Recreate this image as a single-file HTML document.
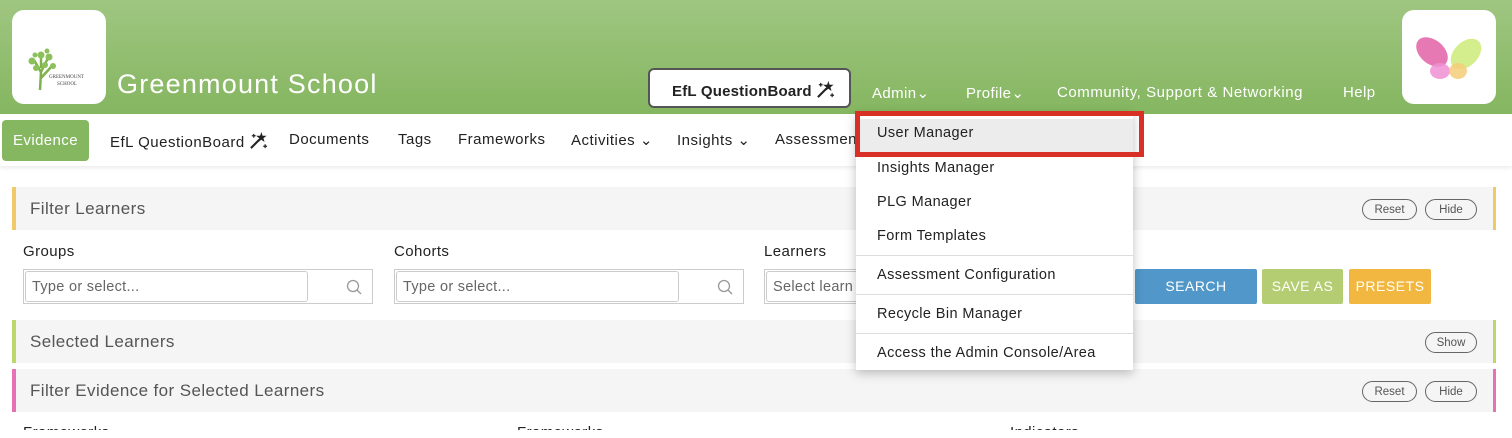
<!DOCTYPE html>
<html><head><meta charset="utf-8"><style>
*{box-sizing:border-box;margin:0;padding:0}
body{width:1512px;height:438px;overflow:hidden;background:#fff;font-family:"Liberation Sans",sans-serif;position:relative;color:#222}
.a{position:absolute;white-space:nowrap}
.hdr{position:absolute;left:0;top:0;width:1512px;height:114px;background:linear-gradient(#9fc681,#85b660)}
.logo{position:absolute;background:#fff;border-radius:12px}
.w{color:#fff;font-size:15px;letter-spacing:.4px}
.nav{font-size:15px;color:#222;letter-spacing:.5px}
.panel{position:absolute;left:12px;width:1484px;height:43px;background:#f5f5f5}
.panel .t{position:absolute;left:14px;top:12px;font-size:17px;color:#555;letter-spacing:.4px}
.pill{position:absolute;top:12px;height:21px;border:1px solid #666;border-radius:11px;font-size:11.5px;color:#555;display:flex;align-items:center;justify-content:center}
.lbl{font-size:15px;color:#222;letter-spacing:.4px}
.inp{position:absolute;top:269px;height:35px;border:1px solid #ccc}
.inp .f{position:absolute;left:1px;top:1px;height:31px;border:1px solid #ccc;border-radius:3px;font-size:14.5px;color:#666;padding:7px 6px;letter-spacing:.3px}
.btn{position:absolute;top:269px;height:35px;color:#fff;font-size:14px;text-align:center;line-height:35px;letter-spacing:.5px;border-radius:2px}
.dd{position:absolute;left:856px;top:113px;width:277px;height:257px;background:#fff;box-shadow:0 3px 10px rgba(0,0,0,.25)}
.di{position:absolute;left:21px;font-size:14.5px;color:#222;letter-spacing:.4px}
.sep{position:absolute;left:0;width:277px;height:1px;background:#ddd}
.wand{display:inline-block;vertical-align:-3px;margin-left:4px}
</style></head><body>
<svg width="0" height="0" style="position:absolute"><defs><symbol id="wd" viewBox="0 0 20 20"><path d="M2 18 L11 9" stroke="#222" stroke-width="2.2"/><path d="M13 1 L14.3 5 L18.5 5 L15.2 7.6 L16.4 11.6 L13 9.2 L9.6 11.6 L10.8 7.6 L7.5 5 L11.7 5 Z" fill="#222"/><path d="M5 3 v4 M3 5 h4 M17 14 v4 M15 16 h4" stroke="#222" stroke-width="1.3"/></symbol></defs></svg>
<div class="hdr"></div>
<div class="logo" style="left:12px;top:10px;width:94px;height:94px">
<svg width="94" height="94" viewBox="0 0 94 94"><g stroke="#7fb24c" stroke-width="2.5" fill="none"><path d="M28 80 L29 62 L22 50 M29 62 L36 48 M29 68 L40 56 M29 58 L29 46"/></g><g fill="#8cc05a"><circle cx="20" cy="51" r="3.5"/><circle cx="29" cy="45" r="3.5"/><circle cx="37" cy="47" r="3.5"/><circle cx="24" cy="58" r="3"/><circle cx="41" cy="56" r="3"/><circle cx="33" cy="55" r="3"/><circle cx="23" cy="45" r="2.5"/><circle cx="35" cy="41" r="2.5"/></g><text x="37" y="68" font-size="5" fill="#444" font-family="Liberation Serif">GREENMOUNT</text><text x="45" y="75" font-size="5" fill="#444" font-family="Liberation Serif">SCHOOL</text></svg>
</div>
<div class="a" style="left:117px;top:69px;font-size:27px;color:#fff;letter-spacing:1.2px">Greenmount School</div>
<div class="a" style="left:648px;top:68px;width:203px;height:40px;background:#fff;border:2px solid #555;border-radius:6px;font-size:15px;font-weight:bold;color:#222;padding:10px 0 0 22px;letter-spacing:.2px">EfL QuestionBoard<svg class="wand" width="19" height="19"><use href="#wd"/></svg></div>
<div class="a w" style="left:872px;top:84px">Admin⌄</div>
<div class="a w" style="left:966px;top:84px">Profile⌄</div>
<div class="a w" style="left:1057px;top:84px;letter-spacing:.55px">Community, Support &amp; Networking</div>
<div class="a w" style="left:1343px;top:84px">Help</div>
<div class="logo" style="left:1402px;top:10px;width:94px;height:94px">
<svg width="94" height="94" viewBox="0 0 94 94"><ellipse cx="30" cy="42" rx="18" ry="12" transform="rotate(40 30 42)" fill="#e36aab" opacity=".9"/><ellipse cx="64" cy="44" rx="18" ry="12" transform="rotate(-45 64 44)" fill="#cdeb7a" opacity=".85"/><ellipse cx="38" cy="61" rx="10" ry="8" fill="#ee8fd3" opacity=".85"/><ellipse cx="56" cy="61" rx="9" ry="8" fill="#f6cd79" opacity=".85"/></svg>
</div>
<div class="a" style="left:0;top:114px;width:1512px;height:52px;background:#fff;box-shadow:0 2px 4px rgba(0,0,0,.08)"></div>
<div class="a" style="left:2px;top:120px;width:87px;height:41px;background:#85b660;border-radius:4px;color:#fff;font-size:15px;text-align:center;line-height:41px;letter-spacing:.4px">Evidence</div>
<div class="a nav" style="left:110px;top:131px">EfL QuestionBoard<svg class="wand" width="19" height="19"><use href="#wd"/></svg></div>
<div class="a nav" style="left:289px;top:131px">Documents</div>
<div class="a nav" style="left:398px;top:131px">Tags</div>
<div class="a nav" style="left:458px;top:131px">Frameworks</div>
<div class="a nav" style="left:571px;top:131px">Activities ⌄</div>
<div class="a nav" style="left:677px;top:131px">Insights ⌄</div>
<div class="a nav" style="left:775px;top:131px">Assessments</div>

<div class="panel" style="top:187px;border-left:4px solid #f0c96a;border-right:3px solid #f0c96a"><div class="t">Filter Learners</div><div class="pill" style="left:1346px;width:55px">Reset</div><div class="pill" style="left:1409px;width:52px">Hide</div></div>
<div class="a lbl" style="left:23px;top:243px">Groups</div>
<div class="a lbl" style="left:394px;top:243px">Cohorts</div>
<div class="a lbl" style="left:764px;top:243px">Learners</div>
<div class="inp" style="left:23px;width:350px"><div class="f" style="width:283px">Type or select...</div><svg class="a" style="left:322px;top:9px" width="16" height="16"><circle cx="7" cy="7" r="5.5" stroke="#999" stroke-width="1.3" fill="none"/><path d="M11 11l4 4" stroke="#999" stroke-width="1.3"/></svg></div>
<div class="inp" style="left:394px;width:350px"><div class="f" style="width:283px">Type or select...</div><svg class="a" style="left:322px;top:9px" width="16" height="16"><circle cx="7" cy="7" r="5.5" stroke="#999" stroke-width="1.3" fill="none"/><path d="M11 11l4 4" stroke="#999" stroke-width="1.3"/></svg></div>
<div class="inp" style="left:764px;width:120px"><div class="f" style="width:116px">Select learn</div></div>
<div class="btn" style="left:1135px;width:122px;background:#5197c9">SEARCH</div>
<div class="btn" style="left:1262px;width:81px;background:#b5cd72">SAVE AS</div>
<div class="btn" style="left:1349px;width:82px;background:#f2b740">PRESETS</div>

<div class="panel" style="top:320px;border-left:4px solid #bcd86c;border-right:3px solid #bcd86c"><div class="t">Selected Learners</div><div class="pill" style="left:1409px;width:52px">Show</div></div>
<div class="panel" style="top:369px;border-left:4px solid #e672b5;border-right:3px solid #e672b5"><div class="t">Filter Evidence for Selected Learners</div><div class="pill" style="left:1346px;width:55px">Reset</div><div class="pill" style="left:1409px;width:52px">Hide</div></div>
<div class="a" style="left:0;top:420px;width:1512px;height:10px;overflow:hidden">
<div class="a lbl" style="left:23px;top:4px">Frameworks</div>
<div class="a lbl" style="left:517px;top:4px">Frameworks</div>
<div class="a lbl" style="left:1010px;top:4px">Indicators</div>
</div>

<div class="dd">
<div class="a" style="left:0;top:6px;width:277px;height:36px;background:#ececec"></div>
<div class="di" style="top:12px">User Manager</div>
<div class="di" style="top:47px">Insights Manager</div>
<div class="di" style="top:81px">PLG Manager</div>
<div class="di" style="top:115px">Form Templates</div>
<div class="sep" style="top:142px"></div>
<div class="di" style="top:154px">Assessment Configuration</div>
<div class="sep" style="top:181px"></div>
<div class="di" style="top:193px">Recycle Bin Manager</div>
<div class="sep" style="top:220px"></div>
<div class="di" style="top:232px">Access the Admin Console/Area</div>
</div>
<div class="a" style="left:855px;top:111px;width:289px;height:46px;border:5px solid #d93025"></div>
</body></html>
